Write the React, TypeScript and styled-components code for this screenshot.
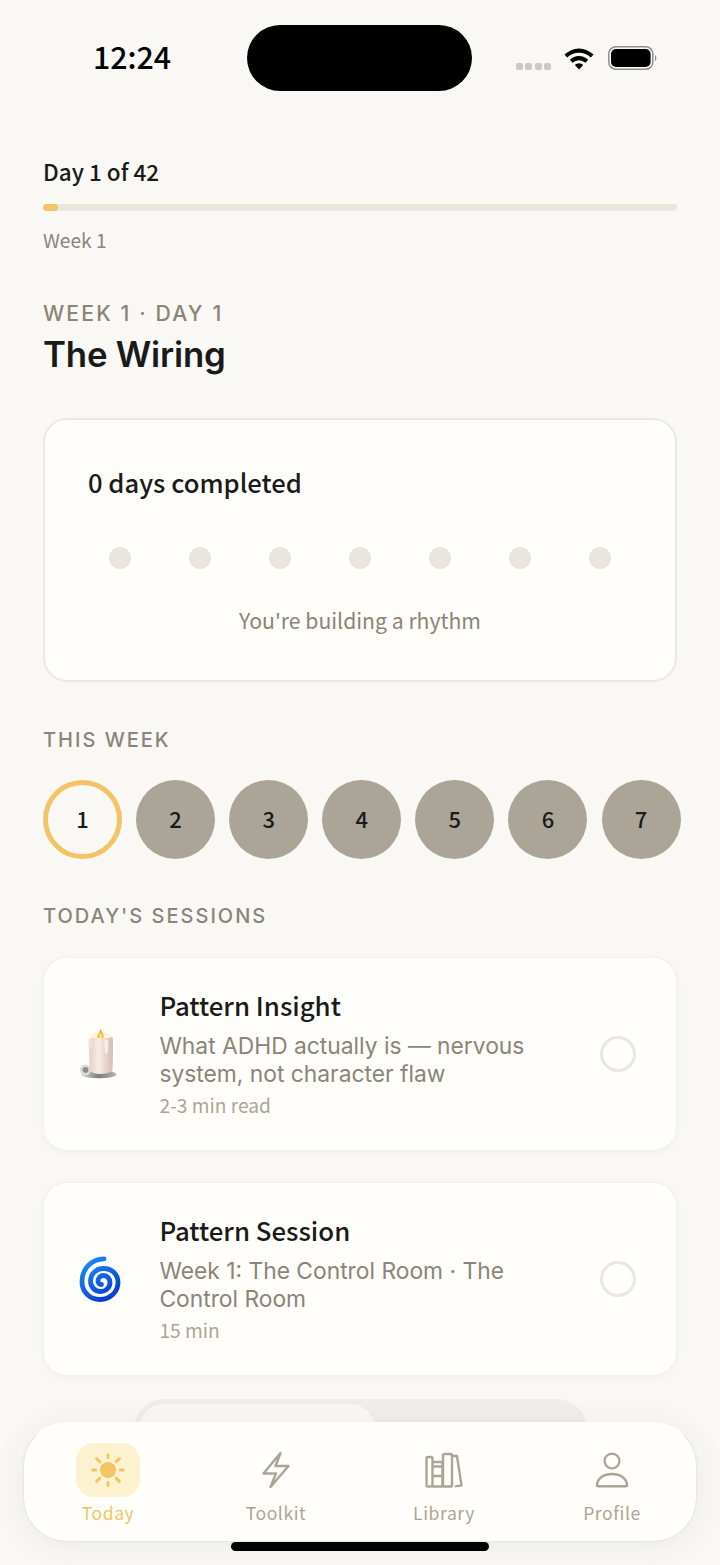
import React from "react";
import styled, { createGlobalStyle } from "styled-components";

const CJK = `"Noto Sans CJK JP", "Noto Sans", sans-serif`;
const UI = `Inter, "Liberation Sans", sans-serif`;

const GlobalStyle = createGlobalStyle`
  html, body {
    margin: 0;
    padding: 0;
    width: 720px;
    height: 1565px;
    overflow: hidden;
    background: #f9f8f5;
  }
  * { box-sizing: border-box; }
`;

const Screen = styled.div`
  position: relative;
  width: 720px;
  height: 1565px;
  overflow: hidden;
  background: #f9f8f5;
  color: #1a1a1a;
`;

const StatusBar = styled.div`
  height: 157px;
  padding: 25px 63px 0 93px;
  display: flex;
  align-items: flex-start;
`;

const Clock = styled.div`
  font: 500 30.3px/63px ${CJK};
  width: 154px;
  color: #000;
`;

const Island = styled.div`
  width: 225px;
  height: 66px;
  border-radius: 33px;
  background: #000;
`;

const StatusIcons = styled.div`
  margin-left: auto;
  height: 66px;
  display: flex;
  align-items: center;
  gap: 14px;
`;

const SignalDots = styled.div`
  display: flex;
  gap: 2.6px;
  margin-top: 16px;
  margin-right: -1px;
`;

const SignalDot = styled.span`
  width: 6.8px;
  height: 7px;
  border-radius: 2px;
  background: #c9c9c7;
`;

const Main = styled.main`
  padding: 0 43px;
`;

const DayLabel = styled.div`
  font: 500 22.5px/28px ${CJK};
  color: #1a1a1a;
`;

const ProgressTrack = styled.div`
  margin-top: 19px;
  height: 7px;
  border-radius: 4px;
  background: #ebe6dd;
  overflow: hidden;
`;

const ProgressFill = styled.div`
  height: 100%;
  border-radius: 4px;
  background: #f2c464;
`;

const WeekLabel = styled.div`
  margin-top: 16px;
  font: 400 19.2px/26px ${CJK};
  color: #8a8578;
`;

const Eyebrow = styled.div<{ $top: number; $size?: number }>`
  margin-top: ${(p) => p.$top}px;
  font: 500 ${(p) => p.$size ?? 20}px/26px ${UI};
  letter-spacing: ${(p) => (p.$size ?? 20) / 10}px;
  color: #8a8578;
`;

const Title = styled.h1`
  margin: 6px 0 0;
  font: 600 34.8px/44px ${UI};
  letter-spacing: -0.2px;
  color: #1a1a1a;
`;

const StreakCard = styled.section`
  margin-top: 42px;
  height: 264px;
  padding: 42px 43px 0;
  border: 2px solid #ede8df;
  border-radius: 24px;
  background: #fffefa;
`;

const StreakTitle = styled.div`
  font: 500 25.6px/40px ${CJK};
  color: #1a1a1a;
`;

const DotRow = styled.div`
  margin-top: 45px;
  padding: 0 21px;
  display: flex;
  justify-content: space-between;
`;

const StreakDot = styled.span`
  width: 22px;
  height: 22px;
  border-radius: 50%;
  background: #e9e5de;
`;

const StreakNote = styled.div`
  margin-top: 34px;
  text-align: center;
  font: 400 21.2px/34px ${CJK};
  color: #8a8578;
`;

const DayRow = styled.div`
  margin-top: 27px;
  display: flex;
  gap: 14.1px;
  width: 640px;
`;

const DayCircle = styled.div<{ $active?: boolean }>`
  flex: none;
  width: 79px;
  height: 79px;
  padding-bottom: 3px;
  border-radius: 50%;
  display: flex;
  align-items: center;
  justify-content: center;
  font: 500 22px/1 ${CJK};
  color: #1a1a1a;
  background: ${(p) => (p.$active ? "#f9f8f5" : "#aba597")};
  border: ${(p) => (p.$active ? "5px solid #f2c464" : "none")};
`;

const SessionList = styled.div`
  margin-top: 28px;
  display: flex;
  flex-direction: column;
  gap: 31px;
`;

const SessionCard = styled.article`
  height: 194px;
  padding: 0 40px 0 35px;
  display: flex;
  align-items: center;
  border: 1px solid #f4f1ec;
  border-radius: 24px;
  background: #fffefa;
  box-shadow: 0 2px 8px rgba(60, 50, 30, 0.04);
`;

const SessionIcon = styled.div`
  flex: none;
  width: 80.4px;
  display: flex;
  justify-content: flex-start;
`;

const SessionBody = styled.div`
  flex: 1;
  min-width: 0;
  padding-bottom: 2px;
`;

const SessionName = styled.div`
  font: 500 25.8px/36px ${CJK};
  color: #1a1a1a;
`;

const SessionText = styled.div`
  margin-top: 9.5px;
  width: 400px;
  font: 400 22.8px/28px ${UI};
  color: #8a8578;
`;

const SessionMeta = styled.div`
  margin-top: 3px;
  font: 400 19.2px/28px ${CJK};
  color: #aba597;
`;

const SessionCheck = styled.span`
  flex: none;
  width: 36px;
  height: 36px;
  border: 3px solid #ebe7df;
  border-radius: 50%;
`;

const BackPill = styled.div`
  position: absolute;
  left: 134px;
  top: 1399px;
  width: 453px;
  height: 60px;
  padding: 5px;
  border-radius: 30px;
  background: #f1eeea;
`;

const BackPillThumb = styled.div`
  width: 236px;
  height: 50px;
  border-radius: 25px;
  background: #f9f8f5;
`;

const TabBar = styled.nav`
  position: absolute;
  left: 23px;
  top: 1422px;
  width: 674px;
  height: 120px;
  display: grid;
  grid-template-columns: repeat(4, 168px);
  border: 1px solid #ebe5da;
  border-top-color: #fffefa;
  border-radius: 44px;
  background: #fffefa;
  box-shadow: 0 4px 32px rgba(60, 50, 30, 0.07);
`;

const Tab = styled.div`
  display: flex;
  flex-direction: column;
  align-items: center;
  padding-top: 20px;
`;

const TabIcon = styled.div<{ $active?: boolean }>`
  width: 64px;
  height: 54px;
  border-radius: 18px;
  display: flex;
  align-items: center;
  justify-content: center;
  background: ${(p) => (p.$active ? "#fdf2d0" : "transparent")};
`;

const TabLabel = styled.div<{ $active?: boolean }>`
  margin-top: 3px;
  font: 400 17.5px/26px ${CJK};
  letter-spacing: 0.6px;
  color: ${(p) => (p.$active ? "#f2c464" : "#aba597")};
`;

const HomeIndicator = styled.div`
  position: absolute;
  left: 231px;
  top: 1542px;
  width: 258px;
  height: 9px;
  border-radius: 5px;
  background: #000;
`;

const Wifi = () => (
  <svg width="30" height="23" viewBox="0 0 30 23">
    <path d="M0.5 7.6 A20.5 20.5 0 0 1 29.5 7.6 L26.8 10.6 A16.5 16.5 0 0 0 3.2 10.6 Z" fill="#000" />
    <path d="M5.8 12.8 A13 13 0 0 1 24.2 12.8 L21.4 15.8 A9 9 0 0 0 8.6 15.8 Z" fill="#000" />
    <path d="M10.8 18 A6 6 0 0 1 19.2 18 L15 22.6 Z" fill="#000" />
  </svg>
);

const Battery = () => (
  <svg width="49" height="24" viewBox="0 0 49 24">
    <rect x="0.8" y="0.8" width="44" height="22.4" rx="7" fill="none" stroke="#8f8f8d" strokeWidth="1.5" />
    <rect x="3" y="3" width="39.6" height="18" rx="5" fill="#000" />
    <path d="M47 9 C48.8 9.6 48.8 14.4 47 15 Z" fill="#8f8f8d" />
  </svg>
);

const Candle = () => (
  <svg width="40" height="50" viewBox="0 0 40 50">
    <defs>
      <linearGradient id="wax" x1="0" x2="1" y1="0" y2="0">
        <stop offset="0" stopColor="#e2cfc5" />
        <stop offset="0.4" stopColor="#f8ece6" />
        <stop offset="1" stopColor="#d3bcb1" />
      </linearGradient>
      <linearGradient id="dish" x1="0" x2="1" y1="0" y2="0">
        <stop offset="0" stopColor="#d0d0d0" />
        <stop offset="0.5" stopColor="#7f7f7f" />
        <stop offset="1" stopColor="#b4b4b4" />
      </linearGradient>
      <radialGradient id="flame" cx="0.5" cy="0.7" r="0.6">
        <stop offset="0" stopColor="#fff3b0" />
        <stop offset="0.6" stopColor="#f9b931" />
        <stop offset="1" stopColor="#e88c1a" />
      </radialGradient>
    </defs>
    <ellipse cx="22" cy="9" rx="11" ry="6" fill="#fff1c9" opacity="0.8" />
    <path d="M21.5 0 C24 4.5 25.5 6.5 24 9.5 C22.5 11 19.8 11 18.8 9.5 C17.5 6.5 20.5 4.5 21.5 0 Z" fill="url(#flame)" />
    <ellipse cx="20" cy="45.5" rx="17.5" ry="3.8" fill="url(#dish)" />
    <path d="M10 11 C15 7 26 11 33.5 8 C34.5 12 34 30 33.5 42 C28 46 15 46 10.5 42 L10 14 Z" fill="url(#wax)" />
    <path d="M9.4 11.5 C10 9.6 13 9 13.2 12 L12.8 19 C12 21 10 21 9.8 19 Z" fill="#f0e2d9" />
    <path d="M25 12 C26 10 29 10 29.2 13 L28.8 23 C28 25 26.4 25 26.2 23 Z" fill="#f8eee8" />
    <circle cx="6.5" cy="41" r="4.2" fill="#8d8d8d" stroke="#dadada" strokeWidth="2.6" />
  </svg>
);

const Spiral = () => (
  <svg width="42" height="46" viewBox="0 0 42 46">
    <defs>
      <linearGradient id="spiralBlue" x1="0" x2="0.6" y1="0" y2="1">
        <stop offset="0" stopColor="#1c93fa" />
        <stop offset="1" stopColor="#0640d2" />
      </linearGradient>
    </defs>
    <path
      d="M25 2.8 C12 3 3 13 3 26 C3 36 11 43.5 21 43.5 C31 43.5 39 36 39 26.5 C39 18 32.5 12.5 24.5 12.5 C17 12.5 11.5 18 11.5 25 C11.5 31 16 35.5 21.5 35.5 C27 35.5 31 31.5 31 26.5 C31 22.5 28 19.5 24.5 19.5 C21.3 19.5 19 22 19 25 C19 27 20.5 28.5 22.5 28.5"
      fill="none"
      stroke="url(#spiralBlue)"
      strokeWidth="4.8"
      strokeLinecap="round"
    />
  </svg>
);

const SunIcon = () => (
  <svg width="36" height="36" viewBox="0 0 36 36" fill="none" stroke="#f2c464" strokeWidth="3" strokeLinecap="round">
    <circle cx="18" cy="18" r="8" fill="#f2c464" stroke="none" />
    <path d="M18 2.8V5.6M18 30.4v2.8M2.8 18H5.6M30.4 18h2.8M6.6 6.6l3.2 3.2M26.2 26.2l3.2 3.2M6.6 29.4l3.2-3.2M26.2 9.8l3.2-3.2" />
  </svg>
);

const BoltIcon = () => (
  <svg width="30" height="38" viewBox="0 0 30 38" fill="none" stroke="#aba597" strokeWidth="2.4" strokeLinejoin="round">
    <path d="M19.5 2 L2.5 22.5 H15 L9.5 36 L27.5 15 H14.5 Z" />
  </svg>
);

const BooksIcon = () => (
  <svg width="38" height="36" viewBox="0 0 38 36" fill="none" stroke="#aba597" strokeWidth="2.4" strokeLinejoin="round">
    <rect x="1.5" y="5" width="6" height="29.5" rx="1.4" />
    <path d="M7.5 14.5H17.5M7.5 24H17.5M7.5 34.5H18.5" />
    <rect x="18" y="2" width="9" height="32.5" rx="1.6" />
    <path d="M17.5 34 V10 H8 M27 4 L32 4 L36.5 33.4 L30 34.4" />
  </svg>
);

const PersonIcon = () => (
  <svg width="34" height="36" viewBox="0 0 34 36" fill="none" stroke="#aba597" strokeWidth="2.4" strokeLinejoin="round">
    <circle cx="17" cy="9" r="7.4" />
    <path d="M2 33.5 C2 26 9 22 17 22 C25 22 32 26 32 33.5 C32 34 31.8 34.3 31 34.3 H3 C2.3 34.3 2 34 2 33.5 Z" />
  </svg>
);

const WEEK_DAYS = [1, 2, 3, 4, 5, 6, 7];

const SESSIONS = [
  {
    name: "Pattern Insight",
    text: "What ADHD actually is — nervous system, not character flaw",
    meta: "2-3 min read",
    icon: <Candle />,
  },
  {
    name: "Pattern Session",
    text: "Week 1: The Control Room · The Control Room",
    meta: "15 min",
    icon: <Spiral />,
  },
];

const TABS = [
  { label: "Today", icon: <SunIcon />, active: true },
  { label: "Toolkit", icon: <BoltIcon /> },
  { label: "Library", icon: <BooksIcon /> },
  { label: "Profile", icon: <PersonIcon /> },
];

const App = () => {
  return (
    <Screen>
      <GlobalStyle />
      <StatusBar>
        <Clock>12:24</Clock>
        <Island />
        <StatusIcons>
          <SignalDots>
            {[0, 1, 2, 3].map((i) => (
              <SignalDot key={i} />
            ))}
          </SignalDots>
          <Wifi />
          <Battery />
        </StatusIcons>
      </StatusBar>

      <Main>
        <DayLabel>Day 1 of 42</DayLabel>
        <ProgressTrack>
          <ProgressFill style={{ width: `${(1 / 42) * 100}%` }} />
        </ProgressTrack>
        <WeekLabel>Week 1</WeekLabel>

        <Eyebrow $top={47} $size={21.2}>
          WEEK 1 · DAY 1
        </Eyebrow>
        <Title>The Wiring</Title>

        <StreakCard>
          <StreakTitle>0 days completed</StreakTitle>
          <DotRow>
            {WEEK_DAYS.map((d) => (
              <StreakDot key={d} />
            ))}
          </DotRow>
          <StreakNote>You're building a rhythm</StreakNote>
        </StreakCard>

        <Eyebrow $top={45}>THIS WEEK</Eyebrow>
        <DayRow>
          {WEEK_DAYS.map((d) => (
            <DayCircle key={d} $active={d === 1}>
              {d}
            </DayCircle>
          ))}
        </DayRow>

        <Eyebrow $top={44}>TODAY'S SESSIONS</Eyebrow>
        <SessionList>
          {SESSIONS.map((s) => (
            <SessionCard key={s.name}>
              <SessionIcon>{s.icon}</SessionIcon>
              <SessionBody>
                <SessionName>{s.name}</SessionName>
                <SessionText>{s.text}</SessionText>
                <SessionMeta>{s.meta}</SessionMeta>
              </SessionBody>
              <SessionCheck />
            </SessionCard>
          ))}
        </SessionList>
      </Main>

      <BackPill>
        <BackPillThumb />
      </BackPill>
      <TabBar>
        {TABS.map((t) => (
          <Tab key={t.label}>
            <TabIcon $active={t.active}>{t.icon}</TabIcon>
            <TabLabel $active={t.active}>{t.label}</TabLabel>
          </Tab>
        ))}
      </TabBar>
      <HomeIndicator />
    </Screen>
  );
};

export default App;
